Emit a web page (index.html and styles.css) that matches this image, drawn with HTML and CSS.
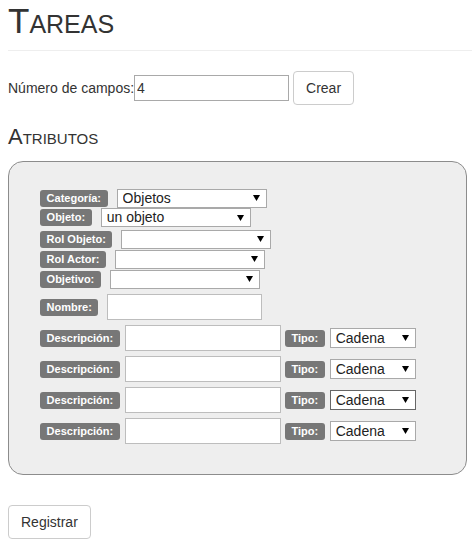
FILE: index.html
```html
<!DOCTYPE html>
<html lang="es">
<head>
<meta charset="utf-8">
<title>Tareas</title>
<link rel="stylesheet" href="styles.css">
</head>
<body>
<div class="page">
  <h1 class="title">Tareas</h1>
  <hr class="rule">
  <div class="count-row">
    <span class="count-label">Número de campos:</span><input class="count-input" type="text" value="4">
    <button class="btn" type="button">Crear</button>
  </div>
  <h3 class="subtitle">Atributos</h3>
  <div class="panel">
    <div class="fields">
      <div class="row"><span class="tag">Categoría:</span><select class="sel"><option>Objetos</option></select></div>
      <div class="row row-tall"><span class="tag">Objeto:</span><select class="sel"><option>un objeto</option></select></div>
      <div class="row"><span class="tag">Rol Objeto:</span><select class="sel"><option></option></select></div>
      <div class="row"><span class="tag">Rol Actor:</span><select class="sel"><option></option></select></div>
      <div class="row"><span class="tag">Objetivo:</span><select class="sel"><option></option></select></div>
    </div>
    <div class="row row-input"><span class="tag">Nombre:</span><input class="txt" type="text"></div>
    <div class="row row-input row-desc"><span class="tag">Descripción:</span><input class="txt" type="text"><span class="tag">Tipo:</span><select class="sel sel-type"><option>Cadena</option></select></div>
    <div class="row row-input row-desc"><span class="tag">Descripción:</span><input class="txt" type="text"><span class="tag">Tipo:</span><select class="sel sel-type"><option>Cadena</option></select></div>
    <div class="row row-input row-desc"><span class="tag">Descripción:</span><input class="txt" type="text"><span class="tag">Tipo:</span><select class="sel sel-type sel-hover"><option>Cadena</option></select></div>
    <div class="row row-input row-desc"><span class="tag">Descripción:</span><input class="txt" type="text"><span class="tag">Tipo:</span><select class="sel sel-type"><option>Cadena</option></select></div>
  </div>
  <button class="btn btn-register" type="button">Registrar</button>
</div>
</body>
</html>
```
FILE: styles.css
```css
* { box-sizing: border-box; }

html, body {
  margin: 0;
  padding: 0;
  background: #fff;
}

body {
  font-family: "Liberation Sans", Arial, sans-serif;
  font-size: 14px;
  color: #333;
}

.page {
  padding: 0 0 0 8px;
}

.title {
  margin: 2px 0 0;
  font-size: 35px;
  line-height: 38px;
  font-weight: normal;
  font-variant: small-caps;
  color: #333;
}

.rule {
  margin: 10px 0 0;
  border: 0;
  border-top: 1px solid #eee;
  height: 0;
}

.count-row {
  display: flex;
  align-items: center;
  margin-top: 20px;
  height: 34px;
}

.count-label {
  line-height: 20px;
}

.count-input {
  width: 155px;
  height: 26px;
  margin: 0 0 0 0;
  padding: 0 2px;
  border: 1px solid #a9a9a9;
  font-family: "Liberation Sans", Arial, sans-serif;
  font-size: 14px;
  color: #333;
  outline: none;
}

.btn {
  height: 34px;
  padding: 6px 12px;
  margin-left: 4px;
  border: 1px solid #ccc;
  border-radius: 4px;
  background: #fff;
  color: #333;
  font-family: "Liberation Sans", Arial, sans-serif;
  font-size: 14px;
  line-height: 20px;
}

.subtitle {
  margin: 20px 0 0;
  font-size: 22px;
  line-height: 24px;
  font-weight: normal;
  font-variant: small-caps;
  color: #333;
}

.panel {
  width: 459px;
  margin-top: 12px;
  padding: 26px 0 30px 31px;
  border: 1px solid #8c8c8c;
  border-radius: 15px;
  background: #eee;
}

.fields {
  display: flex;
  flex-direction: column;
}

.row {
  display: flex;
  align-items: center;
  height: 20px;
}

.row-tall {
  height: 21px;
  align-items: flex-start;
}

.row-tall .tag {
  margin-top: 1px;
}

.row-input {
  height: 26px;
  margin-top: 5px;
}

.tag {
  display: inline-block;
  height: 17px;
  padding: 0 6.6px;
  border-radius: 3px;
  background: #777;
  color: #fff;
  font-family: "Liberation Sans", Arial, sans-serif;
  font-size: 11px;
  font-weight: bold;
  line-height: 17px;
  white-space: nowrap;
  margin-right: 9px;
}

.row-desc .tag {
  margin-right: 5px;
}

.row-desc .txt {
  margin-right: 4px;
}

.sel {
  -webkit-appearance: none;
  appearance: none;
  width: 150px;
  height: 19px;
  margin: 0;
  padding: 0 0 0 5px;
  border: 1px solid #a9a9a9;
  border-radius: 0;
  background: #fff url("data:image/svg+xml,%3Csvg xmlns='http://www.w3.org/2000/svg' width='7' height='6' viewBox='0 0 7 6'%3E%3Cpath d='M0 0H7L3.5 6Z' fill='%23000'/%3E%3C/svg%3E") no-repeat right 6px center / 7px 6px;
  font-family: "Liberation Sans", Arial, sans-serif;
  font-size: 14px;
  line-height: 17px;
  color: #222;
  outline: none;
}

.sel-type {
  width: 86px;
  height: 20px;
}

.sel-hover {
  border-color: #666;
}

.txt {
  width: 155px;
  height: 26px;
  margin: 0;
  padding: 0 2px;
  border: 1px solid #bdbdbd;
  background: #fff;
  font-family: "Liberation Sans", Arial, sans-serif;
  font-size: 14px;
  outline: none;
}

.row-desc .txt {
  width: 156px;
}

.btn-register {
  display: block;
  margin: 30px 0 0;
}
```
